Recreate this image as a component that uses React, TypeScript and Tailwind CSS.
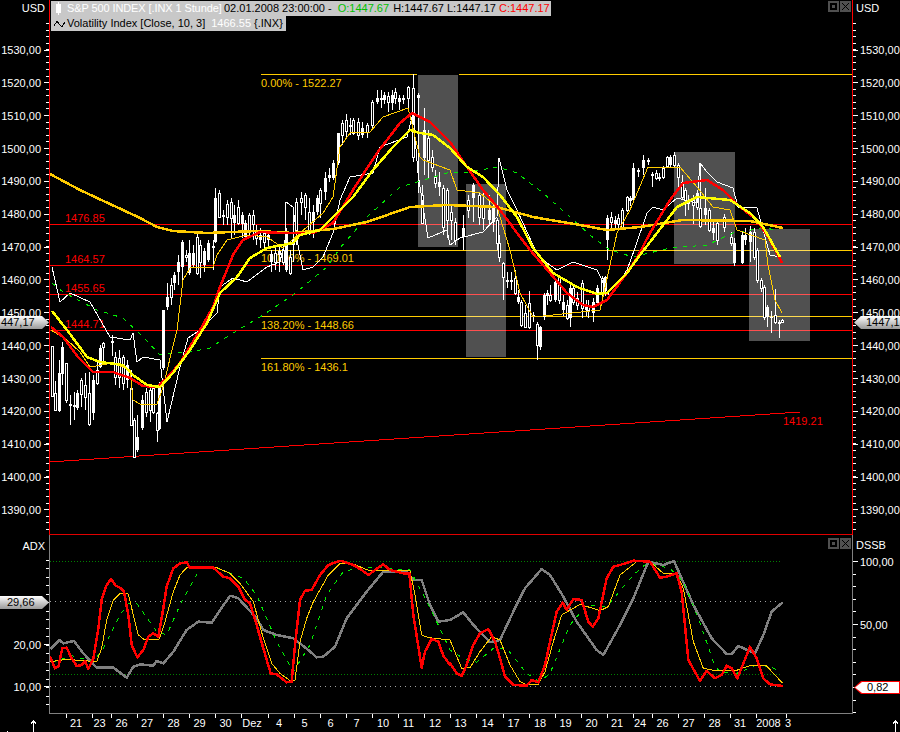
type Pt = [number, number];

const pts = (list: Pt[]) => list.map((p) => p.join(',')).join(' ');
// traced from 3x crops of the picture
const z = (ox: number, oy: number, list: Pt[]): Pt[] =>
  list.map(([x, y]) => [ox + x / 3, oy + y / 3]);

const priceY = (p: number) => 49.5 + (1530 - p) * 3.285;
const PRICES = [1530, 1520, 1510, 1500, 1490, 1480, 1470, 1460, 1450, 1440, 1430, 1420, 1410, 1400, 1390];

// x, body top, body bottom, wick top, wick bottom, solid
const CANDLES: number[][] = [
  [52, 346, 396, 346, 397, 0], [55, 393, 410, 381, 411, 0], [59, 373, 411, 360, 412, 1], [62, 347, 374, 342, 385, 1],
  [66, 363, 400, 363, 403, 0], [70, 404, 406, 395, 425, 1], [74, 405, 407, 392, 420, 1], [77, 393, 408, 390, 410, 1],
  [81, 380, 394, 378, 407, 0], [85, 385, 397, 373, 410, 0], [89, 393, 424, 372, 426, 0], [93, 380, 413, 375, 420, 1],
  [97, 370, 383, 360, 385, 0], [100, 348, 367, 345, 368, 1], [103, 343, 347, 342, 365, 0], [112, 341, 343, 335, 356, 1],
  [115, 357, 377, 352, 385, 0], [119, 358, 377, 350, 388, 0], [123, 357, 383, 355, 390, 0], [127, 365, 380, 360, 388, 1],
  [131, 388, 425, 370, 426, 0], [134, 420, 457, 418, 458, 0], [137, 437, 450, 415, 452, 1], [142, 400, 428, 395, 430, 1],
  [146, 392, 412, 388, 417, 0], [150, 390, 410, 388, 422, 0], [153, 388, 412, 387, 414, 0], [157, 413, 430, 412, 442, 0],
  [159, 384, 429, 382, 430, 1], [163, 310, 368, 310, 370, 1], [167, 297, 307, 283, 310, 1], [171, 285, 297, 278, 305, 0],
  [174, 275, 283, 272, 290, 1], [178, 262, 272, 255, 285, 1], [182, 242, 267, 240, 285, 1], [186, 255, 257, 250, 262, 0],
  [189, 253, 273, 240, 275, 1], [193, 253, 265, 245, 268, 1], [197, 237, 273, 232, 275, 0], [200, 245, 262, 240, 278, 0],
  [204, 251, 265, 248, 272, 1], [208, 243, 260, 240, 262, 1], [213, 246, 248, 240, 270, 1], [215, 198, 242, 188, 243, 1],
  [219, 193, 217, 190, 218, 0], [223, 215, 217, 210, 225, 1], [227, 204, 217, 200, 225, 0], [231, 202, 218, 198, 238, 0],
  [234, 215, 223, 205, 235, 1], [238, 207, 223, 200, 225, 0], [242, 215, 224, 212, 238, 1], [245, 223, 237, 220, 240, 1],
  [249, 215, 231, 213, 238, 0], [253, 215, 224, 210, 240, 0], [256, 232, 238, 225, 245, 0], [260, 235, 240, 228, 248, 1],
  [264, 233, 242, 230, 250, 0], [268, 235, 240, 232, 248, 1], [271, 254, 262, 250, 272, 1], [275, 253, 262, 248, 270, 0],
  [279, 251, 255, 245, 272, 1], [283, 250, 262, 247, 265, 0], [286, 233, 270, 228, 272, 1], [290, 257, 273, 250, 275, 0],
  [293, 240, 245, 215, 262, 1], [296, 202, 233, 198, 245, 0], [301, 198, 202, 192, 215, 0], [305, 195, 207, 193, 220, 0],
  [309, 212, 233, 198, 235, 0], [313, 212, 222, 205, 238, 1], [317, 198, 212, 195, 215, 1], [320, 190, 203, 188, 218, 0],
  [325, 178, 192, 172, 200, 1], [329, 175, 178, 168, 182, 1], [333, 163, 178, 160, 180, 1], [338, 133, 163, 133, 165, 1],
  [342, 123, 135, 120, 145, 0], [346, 120, 131, 114, 138, 0], [350, 125, 127, 118, 135, 1], [353, 120, 133, 118, 135, 0],
  [358, 122, 135, 118, 140, 0], [362, 128, 135, 122, 138, 1], [367, 125, 132, 123, 138, 0], [372, 102, 125, 100, 128, 0],
  [377, 98, 102, 90, 104, 1], [381, 98, 100, 90, 108, 1], [384, 95, 100, 92, 104, 1], [388, 96, 102, 92, 112, 0],
  [392, 95, 103, 90, 110, 1], [395, 92, 98, 88, 104, 0], [399, 98, 102, 95, 110, 1], [403, 98, 100, 95, 104, 1],
  [408, 87, 98, 86, 110, 0], [413, 88, 157, 74, 162, 0], [418, 95, 98, 93, 193, 1], [422, 195, 223, 185, 224, 0],
  [424, 130, 158, 108, 175, 1], [428, 138, 160, 130, 178, 0], [432, 157, 167, 150, 172, 0], [435, 177, 183, 170, 188, 0],
  [439, 182, 187, 172, 196, 1], [443, 188, 227, 185, 235, 0], [447, 190, 220, 188, 238, 0], [451, 212, 220, 205, 240, 0],
  [455, 222, 240, 218, 245, 0], [463, 228, 237, 215, 250, 1], [468, 200, 210, 195, 218, 0], [473, 185, 198, 183, 222, 1],
  [479, 195, 217, 192, 225, 0], [483, 205, 218, 192, 230, 0], [489, 210, 220, 195, 226, 1], [493, 208, 222, 200, 232, 1],
  [497, 220, 243, 218, 250, 0], [499, 243, 257, 235, 262, 0], [503, 263, 277, 262, 300, 0], [507, 280, 282, 272, 288, 1],
  [511, 280, 282, 272, 290, 1], [515, 278, 293, 270, 295, 0], [518, 297, 302, 290, 304, 1], [521, 302, 325, 300, 327, 0],
  [525, 313, 327, 305, 328, 0], [529, 303, 327, 291, 329, 0], [533, 315, 317, 312, 322, 1], [537, 324, 345, 322, 360, 0],
  [540, 327, 347, 326, 350, 1], [544, 295, 317, 293, 320, 1], [547, 293, 296, 290, 305, 1], [550, 295, 300, 285, 302, 0],
  [555, 282, 300, 278, 302, 1], [559, 277, 300, 275, 304, 0], [563, 302, 310, 295, 316, 1], [567, 305, 318, 300, 320, 0],
  [570, 288, 318, 285, 327, 1], [573, 288, 302, 284, 305, 0], [577, 298, 305, 292, 310, 0], [582, 283, 308, 280, 318, 0],
  [586, 307, 310, 300, 316, 1], [588, 305, 310, 300, 318, 0], [593, 302, 313, 298, 322, 1], [597, 288, 303, 285, 305, 1],
  [602, 278, 293, 276, 296, 0], [605, 277, 290, 276, 296, 1], [607, 218, 240, 215, 260, 1], [611, 217, 222, 212, 228, 0],
  [615, 220, 224, 216, 228, 1], [618, 218, 224, 214, 228, 0], [622, 210, 227, 208, 228, 0], [627, 197, 210, 196, 212, 0],
  [630, 198, 201, 196, 206, 1], [633, 168, 200, 163, 202, 1], [638, 170, 172, 168, 177, 1], [643, 160, 168, 155, 175, 1],
  [648, 160, 162, 158, 165, 1], [652, 174, 176, 172, 187, 1], [656, 173, 178, 170, 180, 0], [659, 177, 179, 173, 181, 1],
  [663, 168, 177, 166, 179, 0], [667, 157, 166, 156, 168, 0], [670, 157, 165, 155, 167, 1], [674, 155, 165, 152, 167, 0],
  [678, 165, 177, 163, 190, 0], [682, 182, 197, 175, 200, 0], [685, 190, 200, 188, 216, 0], [688, 201, 204, 195, 210, 1],
  [693, 200, 205, 195, 224, 0], [697, 193, 207, 190, 210, 0], [700, 208, 226, 163, 228, 0], [705, 208, 215, 188, 225, 1],
  [709, 210, 230, 208, 232, 0], [713, 228, 233, 222, 240, 1], [717, 223, 240, 220, 245, 0], [724, 217, 227, 214, 232, 0],
  [731, 237, 243, 232, 246, 0], [734, 243, 263, 238, 266, 1], [742, 235, 263, 232, 264, 1], [745, 235, 240, 228, 245, 1],
  [750, 232, 242, 226, 262, 1], [754, 232, 257, 228, 260, 0], [757, 250, 280, 248, 283, 0], [761, 280, 288, 278, 292, 0],
  [764, 287, 317, 285, 320, 0], [767, 307, 317, 305, 327, 1], [771, 317, 318, 311, 333, 1], [775, 315, 322, 289, 324, 0],
  [779, 322, 324, 320, 338, 1], [782, 320, 322, 319, 323, 0],
];

const MA_LONG: Pt[] = [[50, 174], [65, 182], [80, 190], [97, 198], [123, 210], [140, 218], [157, 227], [173, 231], [207, 233], [257, 231], [293, 233], [333, 229], [367, 222], [410, 207], [447, 205], [497, 207], [533, 217], [580, 225], [607, 230], [640, 227], [683, 220], [750, 221], [783, 228]];
const RED_MA: Pt[] = [[51, 327], [63, 337], [78, 357], [93, 372], [113, 372], [130, 378], [143, 386], [157, 387], [167, 378], [180, 363], [200, 330], [213, 307], [220, 287], [233, 255], [243, 240], [260, 232], [283, 233], [313, 233], [333, 223], [353, 190], [377, 153], [400, 123], [412, 113], [430, 122], [450, 142], [467, 167], [483, 190], [500, 210], [517, 233], [530, 250], [550, 273], [567, 293], [583, 305], [593, 307], [607, 300], [627, 273], [637, 258], [650, 233], [670, 200], [683, 183], [707, 180], [723, 190], [740, 207], [757, 220], [770, 240], [782, 263]];
const YELLOW_MA: Pt[] = [[52, 311], [67, 330], [87, 357], [100, 362], [123, 365], [133, 375], [147, 385], [160, 387], [173, 373], [190, 350], [207, 323], [220, 293], [237, 277], [250, 258], [267, 248], [293, 243], [300, 235], [320, 230], [333, 217], [353, 197], [373, 170], [393, 147], [410, 130], [420, 133], [433, 135], [450, 148], [467, 167], [483, 177], [500, 195], [517, 217], [533, 248], [553, 273], [577, 287], [597, 294], [607, 293], [627, 273], [640, 255], [657, 233], [677, 207], [697, 197], [730, 200], [750, 213], [763, 227], [780, 257]];
const THIN_GOLD: Pt[] = [[51, 330], [67, 340], [80, 352], [90, 367], [113, 363], [130, 370], [133, 400], [140, 404], [157, 404], [163, 387], [177, 330], [183, 280], [190, 268], [213, 267], [217, 255], [227, 240], [247, 235], [267, 237], [283, 248], [307, 227], [323, 213], [333, 197], [340, 147], [350, 133], [370, 132], [383, 117], [408, 108], [420, 157], [423, 160], [450, 170], [457, 190], [480, 193], [497, 207], [510, 250], [520, 293], [533, 317], [553, 315], [600, 310], [610, 265], [617, 233], [630, 210], [648, 167], [663, 168], [680, 167], [697, 187], [713, 207], [730, 210], [737, 230], [765, 240], [768, 265], [775, 300], [782, 313]];
const THIN_WHITE: Pt[] = [[52, 267], [60, 302], [70, 293], [90, 302], [110, 337], [130, 340], [133, 333], [137, 362], [143, 357], [160, 360], [167, 422], [180, 367], [188, 338], [200, 330], [217, 313], [220, 287], [233, 278], [247, 282], [267, 267], [280, 262], [285, 240], [286, 202], [293, 207], [298, 245], [303, 270], [313, 267], [323, 257], [333, 233], [340, 200], [350, 177], [373, 173], [380, 147], [407, 137], [413, 113], [418, 173], [422, 200], [428, 238], [447, 230], [450, 245], [460, 238], [483, 232], [497, 217], [499, 158], [507, 190], [517, 210], [533, 245], [540, 258], [557, 270], [573, 262], [597, 270], [610, 297], [627, 270], [635, 248], [647, 213], [653, 207], [663, 210], [677, 198], [697, 203], [700, 163], [707, 172], [717, 182], [733, 188], [738, 207], [757, 208], [770, 255], [780, 257]];
const GREEN_MA: Pt[] = [[52, 283], [63, 292], [97, 310], [123, 318], [143, 337], [160, 355], [200, 350], [210, 348], [233, 333], [260, 317], [293, 295], [327, 267], [340, 248], [367, 217], [400, 187], [447, 173], [470, 172], [497, 167], [517, 173], [543, 193], [570, 217], [590, 235], [610, 250], [633, 257], [670, 248], [707, 245], [733, 233], [763, 228], [778, 230]];

const OSC_RED: Pt[] = [
  ...z(0, 525, [[150, 395], [165, 430], [175, 425], [187, 370], [200, 368], [215, 400], [230, 423], [245, 420], [255, 408], [265, 432], [280, 400], [295, 310], [305, 225], [320, 180], [333, 162], [347, 182], [360, 188], [372, 200], [385, 270], [395, 360], [412, 397], [430, 375], [445, 335], [460, 325], [475, 335], [490, 250], [500, 185], [520, 130], [540, 115], [560, 112], [570, 128], [640, 128], [670, 155], [690, 160], [715, 185], [735, 225], [750, 235], [770, 300], [790, 370], [812, 445], [830, 448], [860, 472], [875, 470], [885, 360], [900, 225], [915, 197], [935, 195], [960, 150], [985, 120], [1020, 107], [1060, 120], [1085, 135], [1105, 150], [1125, 135], [1150, 118], [1170, 135], [1210, 145], [1228, 145], [1240, 270], [1265, 428], [1275, 380], [1295, 342], [1315, 350], [1330, 392], [1350, 420]]),
  ...z(450, 525, [[0, 415], [20, 445], [35, 453], [50, 420], [70, 360], [90, 325], [115, 312], [135, 350], [150, 400], [165, 455], [190, 480], [230, 482], [245, 465], [265, 472], [285, 420], [300, 350], [320, 260], [338, 233], [350, 255], [370, 222], [395, 225], [415, 290], [428, 305], [445, 280], [470, 160], [490, 125], [510, 120], [550, 107], [600, 110], [630, 158], [650, 155], [680, 145], [695, 200], [715, 405], [750, 468], [770, 438], [795, 460], [815, 450], [830, 422], [845, 430], [862, 460], [900, 365], [920, 400], [940, 460], [960, 478], [998, 483]]),
];
const OSC_GOLD: Pt[] = [
  ...z(0, 525, [[150, 410], [200, 403], [290, 410], [305, 370], [320, 285], [340, 225], [360, 205], [385, 207], [400, 270], [415, 330], [435, 345], [478, 342], [495, 290], [520, 200], [540, 150], [560, 128], [650, 128], [690, 145], [720, 175], [760, 230], [790, 340], [815, 415], [840, 445], [870, 467], [885, 465], [900, 350], [920, 280], [940, 230], [985, 150], [1020, 115], [1060, 117], [1110, 138], [1230, 137], [1245, 210], [1265, 330], [1285, 338], [1350, 345]]),
  ...z(450, 525, [[0, 345], [35, 430], [60, 428], [90, 380], [125, 335], [150, 345], [180, 420], [210, 470], [230, 480], [265, 478], [285, 440], [310, 350], [335, 270], [390, 238], [450, 257], [475, 245], [510, 150], [560, 110], [600, 110], [640, 145], [680, 145], [700, 190], [730, 350], [760, 430], [800, 438], [860, 436], [905, 420], [950, 423], [998, 475]]),
];
const OSC_GREEN: Pt[] = [
  ...z(0, 525, [[155, 412], [215, 392], [280, 410], [310, 370], [360, 270], [385, 235], [410, 235], [470, 320], [500, 330], [540, 240], [600, 130], [640, 125], [730, 160], [770, 210], [830, 350], [880, 440], [930, 360], [980, 210], [1030, 140], [1090, 125], [1230, 135], [1270, 210], [1310, 290], [1350, 375]]),
  ...z(450, 525, [[0, 375], [40, 400], [80, 412], [130, 370], [170, 370], [230, 445], [270, 470], [300, 445], [360, 300], [410, 240], [470, 245], [550, 150], [590, 115], [660, 130], [700, 170], [745, 280], [790, 410], [810, 443], [860, 445], [920, 420], [960, 425], [990, 440]]),
];
const OSC_GRAY: Pt[] = [
  ...z(0, 525, [[152, 372], [178, 345], [190, 355], [222, 348], [250, 385], [290, 428], [340, 428], [380, 458], [400, 425], [420, 418], [460, 422], [470, 408], [490, 415], [520, 380], [560, 315], [595, 290], [635, 293], [690, 212], [715, 220], [770, 280], [790, 315], [830, 330], [880, 340], [925, 375], [950, 397], [970, 395], [1005, 365], [1040, 280], [1100, 200], [1150, 140], [1220, 140], [1240, 165], [1265, 165], [1290, 240], [1315, 290], [1350, 285]]),
  ...z(450, 525, [[0, 285], [40, 262], [70, 300], [120, 352], [150, 345], [190, 260], [225, 190], [275, 132], [300, 150], [340, 215], [380, 290], [440, 375], [460, 390], [510, 300], [550, 220], [595, 110], [640, 120], [672, 108], [730, 240], [785, 340], [830, 387], [845, 387], [865, 363], [915, 385], [940, 330], [965, 260], [998, 232]]),
];

const DATES: [number, number, string][] = [
  [66.5, 76, '21'], [92.5, 99.5, '23'], [111.5, 121.5, '26'], [137.5, 147, '27'], [163.5, 173.5, '28'], [189.5, 199.5, '29'], [215.5, 225.5, '30'], [241.5, 252, 'Dez'],
  [268.5, 279, '4'], [294.5, 304.5, '5'], [320.5, 330.5, '6'], [346.5, 356.5, '7'], [372.5, 383, '10'], [398.5, 408.5, '11'], [424.5, 435, '12'], [450.5, 460.5, '13'],
  [476.5, 487.5, '14'], [503.5, 513.5, '17'], [529.5, 540, '18'], [555.5, 565.5, '19'], [581.5, 591.5, '20'], [607.5, 617, '21'], [633.5, 640, '24'], [652.5, 662.5, '26'],
  [678.5, 688.5, '27'], [704.5, 714.5, '28'], [730.5, 740, '31'], [756.5, 768.5, '2008'], [786.5, 788, '3'],
];

function Line({ data, color, width = 1, dash }: { data: Pt[]; color: string; width?: number; dash?: string }) {
  return (
    <polyline
      points={pts(data)}
      fill="none"
      stroke={color}
      strokeWidth={width}
      strokeDasharray={dash}
      strokeLinejoin="round"
      shapeRendering="crispEdges"
    />
  );
}

function HLine({ y, x1 = 50, x2 = 852, color }: { y: number; x1?: number; x2?: number; color: string }) {
  return <line x1={x1} x2={x2} y1={y} y2={y} stroke={color} shapeRendering="crispEdges" />;
}

function Candle({ c }: { c: number[] }) {
  const [x, top, bottom, hi, lo, solid] = c;
  return (
    <g shapeRendering="crispEdges">
      <line x1={x + 0.5} x2={x + 0.5} y1={hi} y2={lo} stroke="#fff" />
      {solid ? (
        <rect x={x - 1} y={top} width={3} height={bottom - top} fill="#fff" />
      ) : (
        <rect x={x - 0.5} y={top + 0.5} width={2} height={bottom - top} fill="#000" stroke="#fff" />
      )}
    </g>
  );
}

function PriceChart() {
  return (
    <svg viewBox="50 0 802 534" className="block w-[802px] h-[534px] text-[11px]">
      <HLine y={74.5} x1={261} x2={417} color="#ffcc00" />
      <HLine y={74.5} x1={459} color="#ffcc00" />
      <HLine y={224.5} color="#ff0000" />
      <HLine y={250.5} x1={261} color="#ffcc00" />
      <HLine y={265.5} color="#ff0000" />
      <HLine y={294.5} color="#ff0000" />
      <HLine y={316.5} x1={261} color="#ffcc00" />
      <HLine y={330.5} color="#ff0000" />
      <HLine y={358.5} x1={261} color="#ffcc00" />
      <Line data={[[49, 462], [800, 412]]} color="#ff0000" />

      <rect x={418} y={75} width={40} height={172} fill="#fff" fillOpacity={0.314} />
      <rect x={466} y={184} width={40} height={173} fill="#fff" fillOpacity={0.314} />
      <rect x={674} y={152} width={61} height={112} fill="#fff" fillOpacity={0.314} />
      <rect x={749} y={229} width={61} height={112} fill="#fff" fillOpacity={0.314} />

      <g fill="#ffcc00">
        <text x={261} y={87}>0.00% - 1522.27</text>
        <text x={261} y={262}>100.00% - 1469.01</text>
        <text x={261} y={329}>138.20% - 1448.66</text>
        <text x={261} y={371}>161.80% - 1436.1</text>
      </g>
      <g fill="#ff0000">
        <text x={65} y={222}>1476.85</text>
        <text x={65} y={263}>1464.57</text>
        <text x={65} y={292}>1455.65</text>
        <text x={65} y={328}>1444.71</text>
        <text x={783} y={425}>1419.21</text>
      </g>

      {CANDLES.map((c) => (
        <Candle key={c[0]} c={c} />
      ))}
      <Line data={THIN_WHITE} color="#ffffff" />
      <Line data={GREEN_MA} color="#00ee00" dash="4 6" />
      <Line data={THIN_GOLD} color="#ffcc00" />
      <Line data={MA_LONG} color="#ffcc00" width={2.5} />
      <Line data={RED_MA} color="#ff0000" width={2.5} />
      <Line data={YELLOW_MA} color="#ffff00" width={2.5} />
    </svg>
  );
}

function OscChart() {
  return (
    <svg viewBox="50 535 802 178" className="block w-[802px] h-[178px]">
      <line x1={50} x2={780} y1={561.5} y2={561.5} stroke="#008000" strokeDasharray="1 2" shapeRendering="crispEdges" />
      <line x1={50} x2={780} y1={601.5} y2={601.5} stroke="#a0a0a0" strokeDasharray="1 4" shapeRendering="crispEdges" />
      <line x1={50} x2={780} y1={674.5} y2={674.5} stroke="#008000" strokeDasharray="1 2" shapeRendering="crispEdges" />
      <line x1={50} x2={780} y1={686.5} y2={686.5} stroke="#a0a0a0" strokeDasharray="1 4" shapeRendering="crispEdges" />
      <Line data={OSC_GRAY} color="#808080" width={2.5} />
      <Line data={OSC_GREEN} color="#00ee00" dash="4 6" />
      <Line data={OSC_GOLD} color="#ffcc00" />
      <Line data={OSC_RED} color="#ff0000" width={2.5} />
    </svg>
  );
}

function Ticks({ side, from, to, step }: { side: 'left' | 'right'; from: number; to: number; step: number }) {
  const list: number[] = [];
  for (let y = from; y <= to; y += step) list.push(y);
  const x2 = side === 'left' ? 46 : 856;
  const x1 = side === 'left' ? 49 : 853;
  return (
    <g stroke="#fff" shapeRendering="crispEdges">
      {list.map((y) => (
        <line key={y} x1={x1} x2={x2} y1={Math.round(y) + 0.5} y2={Math.round(y) + 0.5} />
      ))}
    </g>
  );
}

function PriceAxis({ side }: { side: 'left' | 'right' }) {
  const left = side === 'left';
  return (
    <svg viewBox={left ? '0 0 49 535' : '853 0 47 535'} className={`block h-[535px] text-[11px] ${left ? 'w-[49px]' : 'w-[47px]'}`}>
      <text x={left ? 45 : 856} y={12} textAnchor={left ? 'end' : 'start'} fill="#fff">USD</text>
      <Ticks side={side} from={23} to={530} step={6.57} />
      {PRICES.map((p) => (
        <g key={p}>
          <line
            x1={left ? 44 : 853}
            x2={left ? 49 : 858}
            y1={Math.round(priceY(p)) + 0.5}
            y2={Math.round(priceY(p)) + 0.5}
            stroke="#fff"
            shapeRendering="crispEdges"
          />
          <text x={left ? 41 : 860} y={priceY(p) + 4.5} textAnchor={left ? 'end' : 'start'} fill="#fff">
            {`${p},00`}
          </text>
        </g>
      ))}
    </svg>
  );
}

function WindowButtons() {
  return (
    <div className="flex gap-px">
      <div className="w-[11px] h-[11px] bg-[#505050] flex items-center justify-center">
        <div className="w-[7px] h-[7px] border-2 border-black" />
      </div>
      <div className="w-[11px] h-[11px] bg-[#505050] flex items-center justify-center">
        <svg viewBox="0 0 9 9" className="w-[9px] h-[9px]">
          <path d="M1 1 L8 8 M8 1 L1 8" stroke="#000" fill="none" shapeRendering="crispEdges" />
        </svg>
      </div>
    </div>
  );
}

function RightPill({ label, tone }: { label: string; tone: 'gray' | 'red' }) {
  if (tone === 'red') {
    return (
      <div className="w-[46px] h-[13px] bg-[#ff0000] p-px [clip-path:polygon(0_50%,7px_0,100%_0,100%_100%,7px_100%)]">
        <div className="w-full h-full pl-[12px] bg-white text-black leading-[11px] [clip-path:polygon(0_50%,7px_0,100%_0,100%_100%,7px_100%)]">
          {label}
        </div>
      </div>
    );
  }
  return (
    <div className="w-[46px] h-[13px] pl-[12px] text-black leading-[13px] whitespace-nowrap bg-linear-to-b from-white to-[#9a9a9a] [clip-path:polygon(0_50%,7px_0,100%_0,100%_100%,7px_100%)]">
      {label}
    </div>
  );
}

function LeftPill({ label, indent }: { label: string; indent: string }) {
  return (
    <div className={`w-[49px] h-[13px] text-black leading-[13px] whitespace-nowrap bg-linear-to-b from-white to-[#9a9a9a] [clip-path:polygon(0_0,42px_0,100%_50%,42px_100%,0_100%)] ${indent}`}>
      {label}
    </div>
  );
}

export default function App() {
  return (
    <div className="relative w-[900px] h-[732px] bg-black text-white text-[11px] overflow-hidden [font-family:'Liberation_Sans',sans-serif]">
      {/* price pane */}
      <div className="flex h-[535px]">
        <div className="w-[49px]">
          <PriceAxis side="left" />
        </div>
        <div className="w-[804px] h-[535px] border-x border-b border-x-[#ff0000] border-b-[#e00000]">
          <PriceChart />
        </div>
        <div className="w-[47px]">
          <PriceAxis side="right" />
        </div>
      </div>

      {/* oscillator pane */}
      <div className="flex h-[179px]">
        <svg viewBox="0 535 49 179" className="block w-[49px] h-[179px] text-[11px]">
          <Ticks side="left" from={560} to={712} step={8.48} />
          <text x={45} y={550} textAnchor="end" fill="#fff">ADX</text>
          <line x1={44} x2={49} y1={644.5} y2={644.5} stroke="#fff" shapeRendering="crispEdges" />
          <line x1={44} x2={49} y1={686.5} y2={686.5} stroke="#fff" shapeRendering="crispEdges" />
          <text x={41} y={648.5} textAnchor="end" fill="#fff">20,00</text>
          <text x={41} y={691} textAnchor="end" fill="#fff">10,00</text>
        </svg>
        <div className="w-[804px] h-[179px] border-x border-b border-[#808080]">
          <OscChart />
        </div>
        <svg viewBox="853 535 47 179" className="block w-[47px] h-[179px] text-[11px]">
          <Ticks side="right" from={561} to={713} step={12.6} />
          <text x={856} y={549} fill="#fff">DSSB</text>
          <line x1={853} x2={858} y1={561.5} y2={561.5} stroke="#fff" shapeRendering="crispEdges" />
          <line x1={853} x2={858} y1={624.5} y2={624.5} stroke="#fff" shapeRendering="crispEdges" />
          <text x={860} y={565.5} fill="#fff">100,00</text>
          <text x={860} y={628.5} fill="#fff">50,00</text>
        </svg>
      </div>

      {/* date axis */}
      <svg viewBox="0 714 900 18" className="block w-[900px] h-[18px] text-[11px]">
        {DATES.map(([tick, cx, label]) => (
          <g key={`${tick}${label}`}>
            <line x1={tick} x2={tick} y1={714} y2={718} stroke="#fff" shapeRendering="crispEdges" />
            <text x={cx} y={727} textAnchor="middle" fill="#fff">{label}</text>
          </g>
        ))}
        <path d="M33.5 732 V721 M31 723.5 L33.5 721 L36 723.5" stroke="#fff" fill="none" shapeRendering="crispEdges" />
        <path d="M895.5 732 V721 M893 723.5 L895.5 721 L898 723.5" stroke="#fff" fill="none" shapeRendering="crispEdges" />
        <line x1={7.5} x2={7.5} y1={731} y2={732} stroke="#fff" shapeRendering="crispEdges" />
      </svg>

      {/* chart legends */}
      <div className="absolute left-[51px] top-px flex flex-col items-start text-black leading-[15px] whitespace-pre">
        <div className="flex items-center h-[15px] w-[500px] bg-[#c8c8c8]">
          <svg viewBox="0 0 16 15" className="w-[16px] h-[15px] shrink-0">
            <path d="M7.5 1 V14" stroke="#fff" shapeRendering="crispEdges" />
            <rect x={5} y={3} width={5} height={9} fill="#fff" />
          </svg>
          <span className="w-[157px] text-white tracking-[-0.1px]">S&amp;P 500 INDEX [.INX 1 Stunde]</span>
          <span>02.01.2008 23:00:00 - </span>
          <span className="ml-[3px] text-[#00c000]">O:1447.67</span>
          <span className="ml-px"> H:1447.67 L:1447.17 </span>
          <span className="text-[#ff0000]">C:1447.17</span>
        </div>
        <div className="flex items-center h-[15px] w-[235px] bg-[#c8c8c8]">
          <svg viewBox="0 0 16 15" className="w-[16px] h-[15px] shrink-0">
            <path d="M3 10 L6 5 L9 9 L11 11 L14 6" stroke="#000" fill="none" shapeRendering="crispEdges" />
          </svg>
          <span>Volatility Index [Close, 10, 3] </span>
          <span className="ml-[3px] text-white">1466.55</span>
          <span> {'{.INX}'}</span>
        </div>
      </div>

      <div className="absolute left-[828px] top-px">
        <WindowButtons />
      </div>
      <div className="absolute left-[828px] top-[538px]">
        <WindowButtons />
      </div>

      <div className="absolute left-0 top-[316px]">
        <LeftPill label="447,17" indent="pl-px" />
      </div>
      <div className="absolute left-[854px] top-[316px]">
        <RightPill label="1447,1" tone="gray" />
      </div>
      <div className="absolute left-0 top-[596px]">
        <LeftPill label="29,66" indent="pl-[7px]" />
      </div>
      <div className="absolute left-[854px] top-[681px]">
        <RightPill label="0,82" tone="red" />
      </div>
    </div>
  );
}
